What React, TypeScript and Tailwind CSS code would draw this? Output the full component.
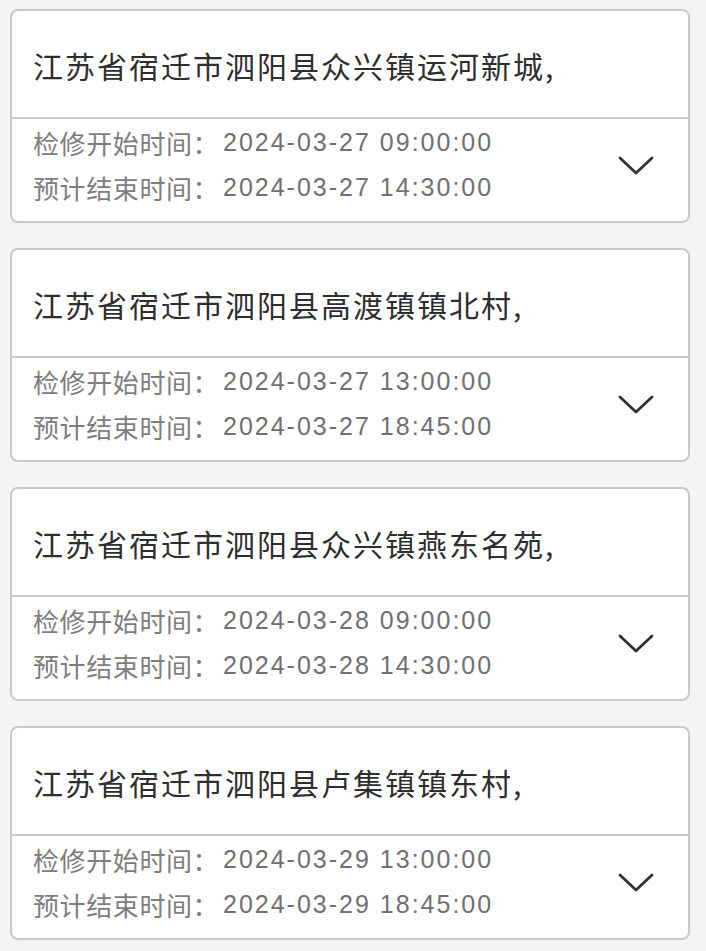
import React from 'react'

const items = [
  { addr: '江苏省宿迁市泗阳县众兴镇运河新城,', start: '2024-03-27 09:00:00', end: '2024-03-27 14:30:00' },
  { addr: '江苏省宿迁市泗阳县高渡镇镇北村,', start: '2024-03-27 13:00:00', end: '2024-03-27 18:45:00' },
  { addr: '江苏省宿迁市泗阳县众兴镇燕东名苑,', start: '2024-03-28 09:00:00', end: '2024-03-28 14:30:00' },
  { addr: '江苏省宿迁市泗阳县卢集镇镇东村,', start: '2024-03-29 13:00:00', end: '2024-03-29 18:45:00' },
]

const cjk = { fontFamily: '"Noto Sans CJK SC", "Noto Sans", sans-serif' }
const num = { fontFamily: '"Liberation Sans", "Noto Sans CJK SC", sans-serif' }

const Chevron = () => (
  <svg width="36" height="22" viewBox="0 0 36 22" fill="none" className="mb-[8px]">
    <path d="M2 3 L18 18 L34 3" stroke="#333" strokeWidth="2.8" strokeLinecap="round" strokeLinejoin="round" />
  </svg>
)

const Row = ({ label, value }: { label: string, value: string }) => (
  <div className="flex items-center h-[45px]">
    <span className="w-[190px] text-[26px] tracking-[0.6px] text-[#7d7d7d]" style={cjk}>{label}</span>
    <span className="text-[25px] tracking-[2px] text-[#707070]" style={num}>{value}</span>
  </div>
)

const App = () => {
  return (
    <div className="min-h-screen w-full bg-[#f4f4f4] pt-[9px] pl-[10px] flex flex-col gap-[25px]">
      {items.map((it, i) => (
        <div key={i} className="w-[680px] rounded-[8px] border-2 border-[#c9c9c9] bg-white">
          <div className="h-[106px] flex items-center pl-[21px] pt-[3px]">
            <span className="text-[30px] tracking-[2px] text-[#2e2e2e]" style={cjk}>{it.addr}</span>
          </div>
          <div className="h-[2px] bg-[#c9c9c9]" />
          <div className="h-[102px] flex items-center justify-between pl-[21px] pr-[34px]">
            <div className="flex flex-col self-start pt-[1px]">
              <Row label="检修开始时间：" value={it.start} />
              <Row label="预计结束时间：" value={it.end} />
            </div>
            <Chevron />
          </div>
        </div>
      ))}
    </div>
  )
}

export default App
